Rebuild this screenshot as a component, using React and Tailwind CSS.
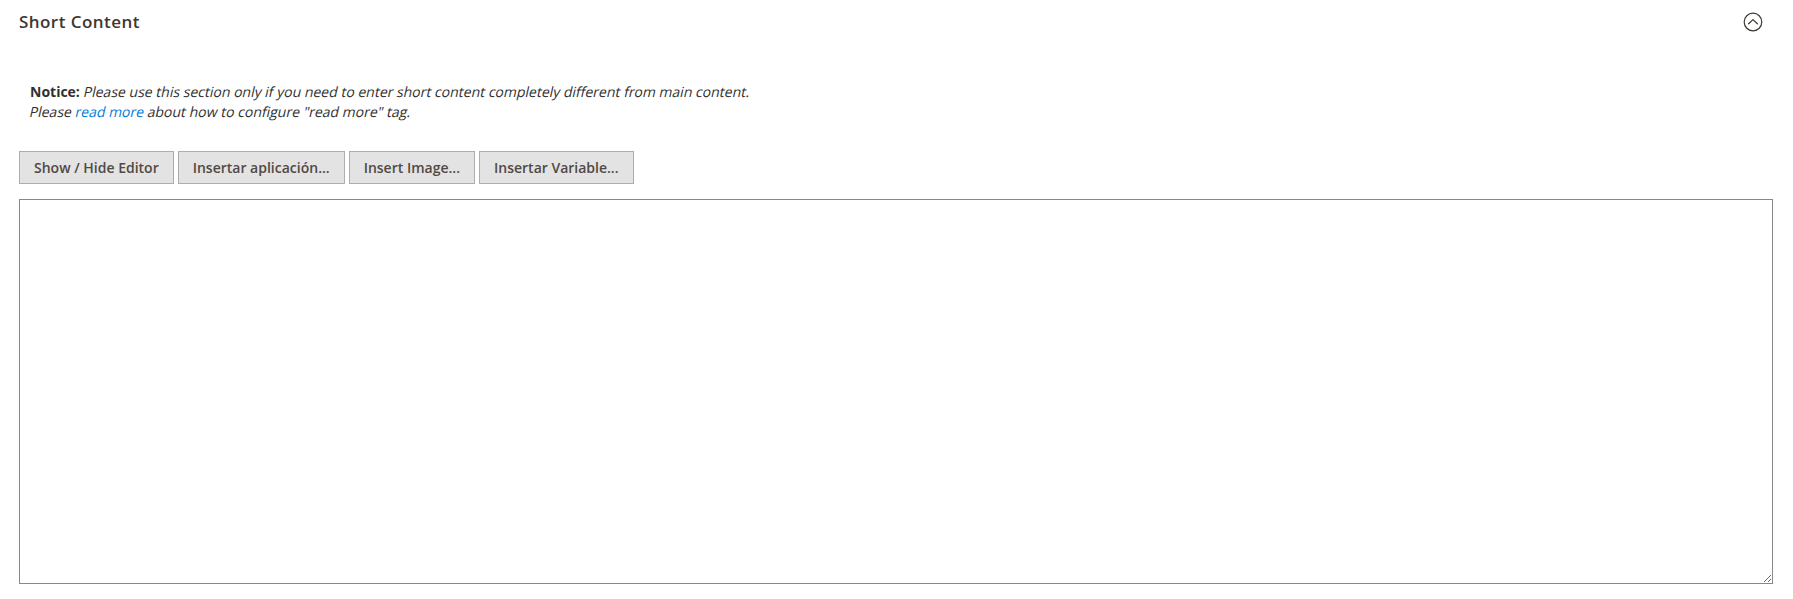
export default function App() {
  const buttons = [
    "Show / Hide Editor",
    "Insertar aplicación...",
    "Insert Image...",
    "Insertar Variable...",
  ];

  return (
    <div className="min-h-[599px] bg-white pl-[19px] pr-[20px] font-['Open_Sans','Liberation_Sans',sans-serif]">
      <div className="flex h-[44px] items-center justify-between">
        <span className="text-[17px] font-semibold leading-[1.2] tracking-[0.45px] text-[#41362f]">
          Short Content
        </span>
        <span className="mr-[10px] flex items-center">
          <svg width="20" height="20" viewBox="0 0 20 20" fill="none">
            <circle cx="10" cy="10" r="8.8" stroke="#41362f" strokeWidth="1.2" />
            <path
              d="M5.6 11.8 L10 7.6 L14.4 11.8"
              stroke="#41362f"
              strokeWidth="1.2"
              strokeLinecap="round"
              strokeLinejoin="round"
            />
          </svg>
        </span>
      </div>

      {/* fake oblique like the original (regular face, slanted) */}
      <div className="mt-[38px] pl-[11px] text-[14px] leading-[1.4] text-[#303030]">
        <div>
          <span className="font-bold">Notice:</span>{" "}
          <span className="inline-block -skew-x-[13deg]">
            Please use this section only if you need to enter short content
            completely different from main content.
          </span>
        </div>
        <div>
          <span className="inline-block -skew-x-[13deg]">
            Please{" "}
            <a href="#" className="text-[#007bdb]">
              read more
            </a>{" "}
            about how to configure "read more" tag.
          </span>
        </div>
      </div>

      <div className="mt-[30px] flex gap-[4px]">
        {buttons.map((label) => (
          <button
            key={label}
            className="h-[33px] border border-[#adadad] bg-[#e3e3e3] px-[14px] text-[14px] font-semibold text-[#514943]"
          >
            {label}
          </button>
        ))}
      </div>

      <textarea className="mt-[15px] block h-[385px] w-full resize-y border border-[#888888] bg-white outline-none"></textarea>
    </div>
  );
}
